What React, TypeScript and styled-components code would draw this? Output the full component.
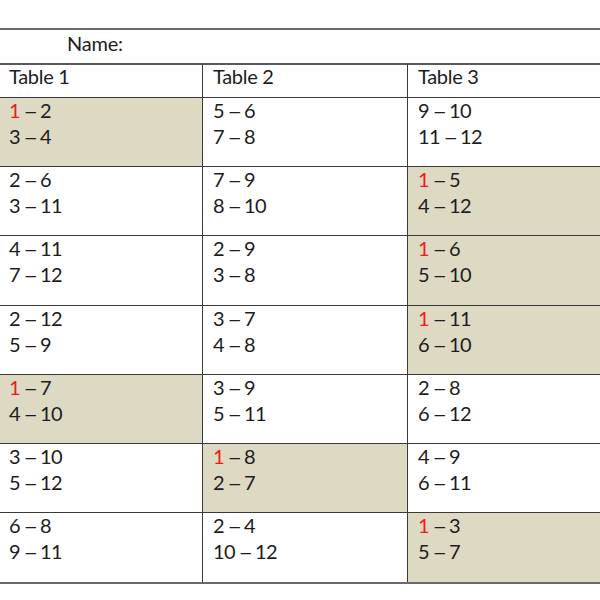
import React from "react";
import styled, { createGlobalStyle } from "styled-components";

const Global = createGlobalStyle`
  html, body { margin: 0; padding: 0; background: #ffffff; }
  body { font-family: Lato, "Open Sans", "Liberation Sans", sans-serif; color: #1c1c22; }
`;

const Page = styled.div`
  width: 600px;
  height: 600px;
  overflow: hidden;
  padding-top: 28px;
  box-sizing: border-box;
`;

const NameRow = styled.div`
  height: 35px;
  box-sizing: border-box;
  border-top: 2px solid #6a6a6a;
  padding-left: 67px;
  font-size: 20px;
  line-height: 26px;
  letter-spacing: -0.2px;
`;

const Grid = styled.div`
  display: grid;
  grid-template-columns: 202px 205px 193px;
  grid-template-rows: 34px 69px 69px 70px 69px 69px 69px 70px;
  border-bottom: 2px solid #6a6a6a;
`;

const Cell = styled.div<{ $shaded?: boolean; $first?: boolean; $header?: boolean }>`
  box-sizing: border-box;
  border-top: ${(p) => (p.$header ? "2px solid #5a5a5a" : "1px solid #3a3a3a")};
  border-left: ${(p) => (p.$first ? "none" : "1px solid #3a3a3a")};
  background: ${(p) => (p.$shaded ? "#ddd9c3" : "#ffffff")};
  padding-left: ${(p) => (p.$first ? "9px" : "10px")};
  font-size: 20px;
  line-height: ${(p) => (p.$header ? "22px" : "26px")};
  letter-spacing: -0.3px;
`;

const Lines = styled.div`
  margin-top: -1px;
`;

const Line = styled.div`
  white-space: pre;
  letter-spacing: -0.6px;
`;

const Dash = styled.span`
  display: inline-block;
  transform: scaleX(1.3);
`;

const One = styled.span`
  color: #f01818;
`;

type Pair = [string, string];
type CellData = Pair[];

const rows: CellData[][] = [
  [[["1", "2"], ["3", "4"]], [["5", "6"], ["7", "8"]], [["9", "10"], ["11", "12"]]],
  [[["2", "6"], ["3", "11"]], [["7", "9"], ["8", "10"]], [["1", "5"], ["4", "12"]]],
  [[["4", "11"], ["7", "12"]], [["2", "9"], ["3", "8"]], [["1", "6"], ["5", "10"]]],
  [[["2", "12"], ["5", "9"]], [["3", "7"], ["4", "8"]], [["1", "11"], ["6", "10"]]],
  [[["1", "7"], ["4", "10"]], [["3", "9"], ["5", "11"]], [["2", "8"], ["6", "12"]]],
  [[["3", "10"], ["5", "12"]], [["1", "8"], ["2", "7"]], [["4", "9"], ["6", "11"]]],
  [[["6", "8"], ["9", "11"]], [["2", "4"], ["10", "12"]], [["1", "3"], ["5", "7"]]],
];

export default function App() {
  return (
    <Page>
      <Global />
      <NameRow>Name:</NameRow>
      <Grid>
        {["Table 1", "Table 2", "Table 3"].map((t, i) => (
          <Cell key={t} $header $first={i === 0}>
            {t}
          </Cell>
        ))}
        {rows.map((row, r) =>
          row.map((cell, c) => {
            const shaded = cell[0][0] === "1";
            return (
              <Cell key={`${r}-${c}`} $shaded={shaded} $first={c === 0}>
                <Lines>
                  {cell.map(([a, b], i) => (
                    <Line key={i}>
                      {a === "1" && i === 0 ? <One>1</One> : a}
                      {" "}
                      <Dash>–</Dash>
                      {" "}
                      {b}
                    </Line>
                  ))}
                </Lines>
              </Cell>
            );
          })
        )}
      </Grid>
    </Page>
  );
}
